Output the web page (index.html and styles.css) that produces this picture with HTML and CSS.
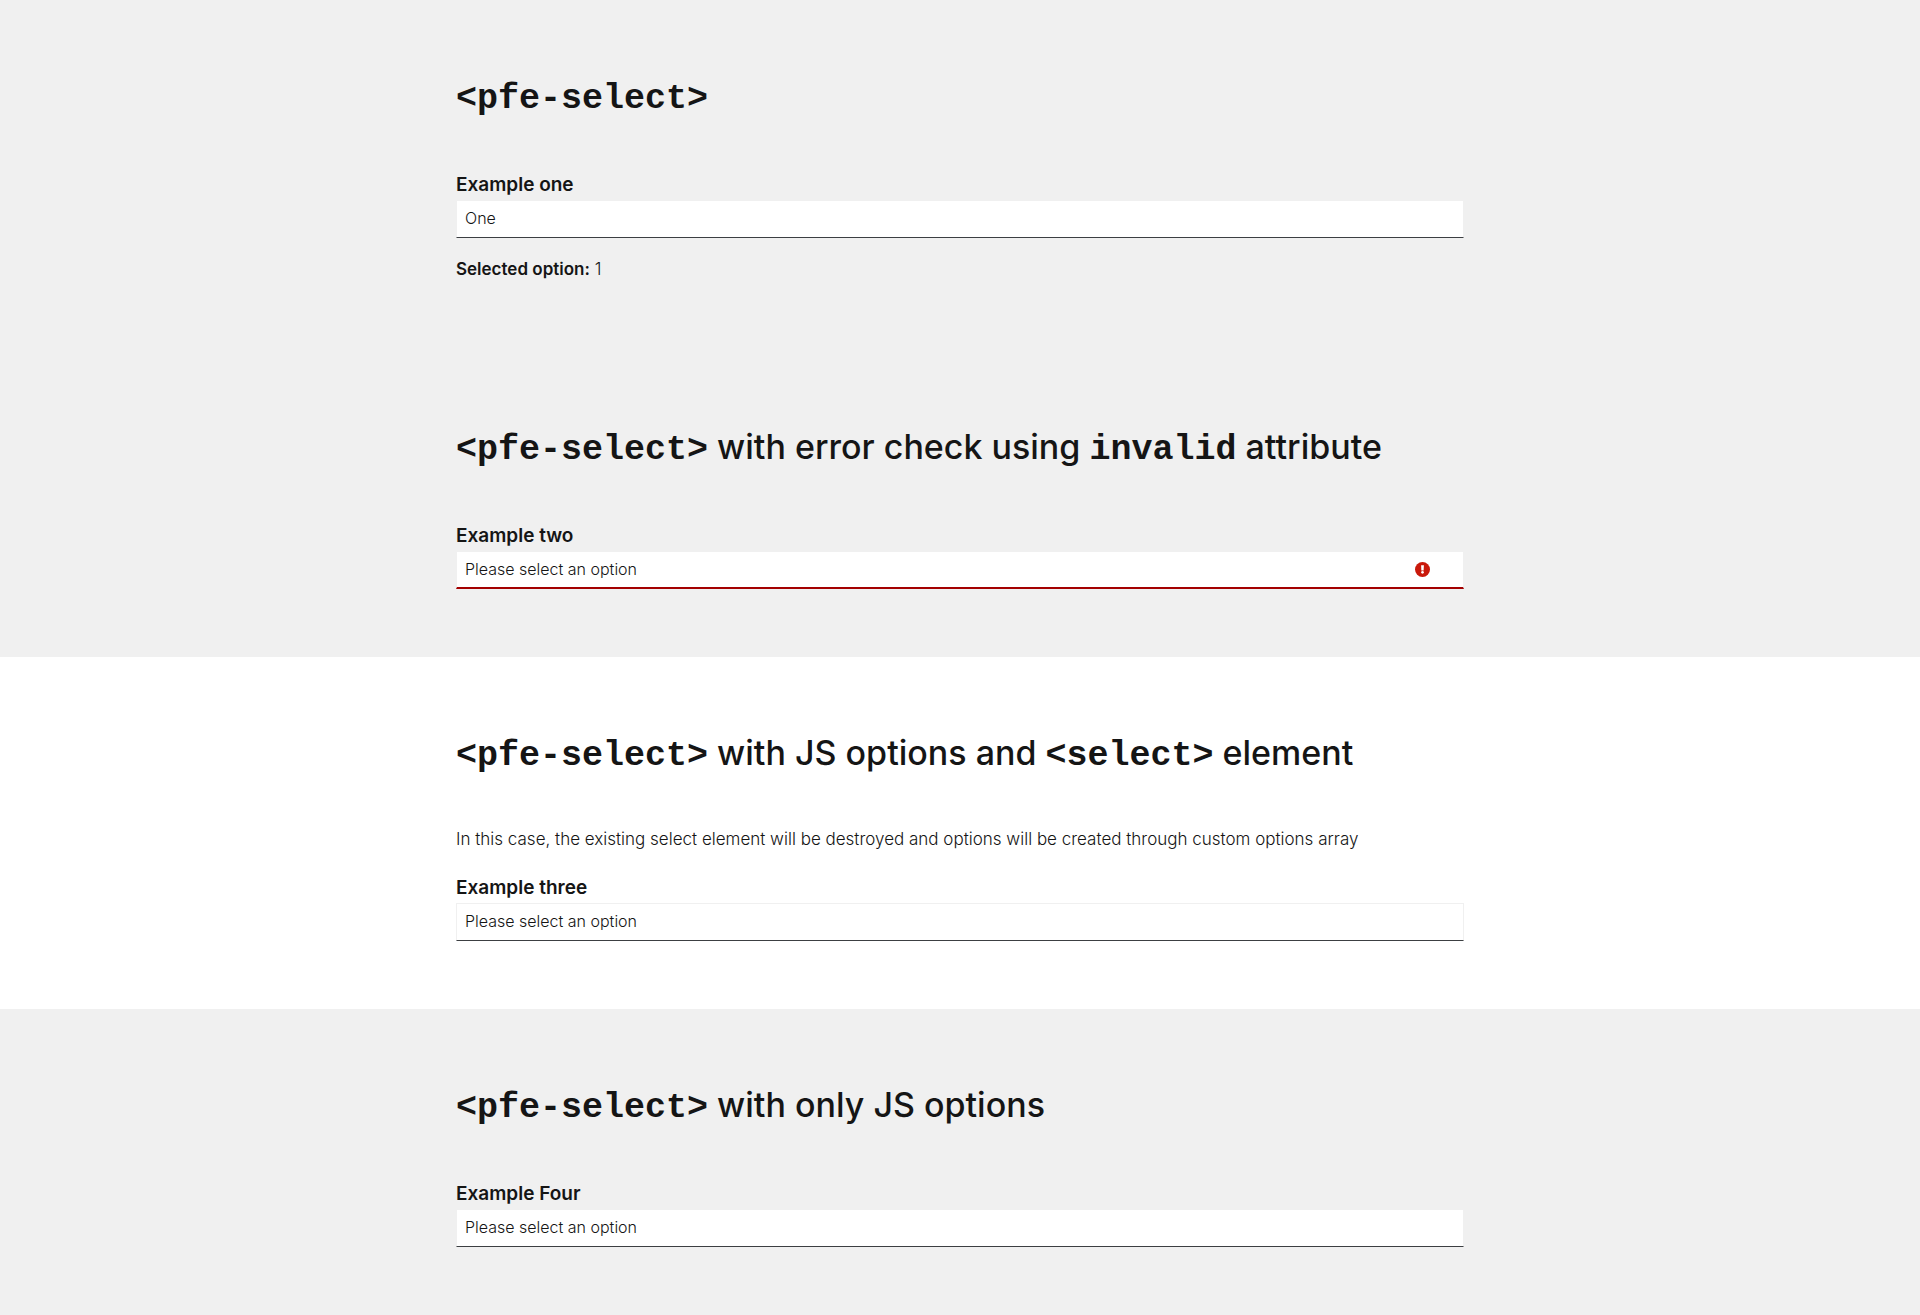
FILE: index.html
```html
<!DOCTYPE html>
<html lang="en">
<head>
  <meta charset="utf-8">
  <meta name="viewport" content="width=device-width, initial-scale=1">
  <title>pfe-select</title>
  <link rel="stylesheet" href="styles.css">
</head>
<body>
  <main>
    <section class="band band--muted">
      <div class="container">
        <h2 class="heading"><code>&lt;pfe-select&gt;</code></h2>
        <div class="field">
          <label class="field__label" for="example-one">Example one</label>
          <div class="field__control">
            <select class="select" id="example-one">
              <option value="1" selected>One</option>
            </select>
          </div>
        </div>
        <p class="result"><strong>Selected option:</strong> 1</p>
      </div>
    </section>

    <section class="band band--muted">
      <div class="container">
        <h2 class="heading"><code>&lt;pfe-select&gt;</code> with error check using <code>invalid</code> attribute</h2>
        <div class="field">
          <label class="field__label" for="example-two">Example two</label>
          <div class="field__control">
            <select class="select select--invalid" id="example-two" aria-invalid="true">
              <option selected>Please select an option</option>
            </select>
            <svg class="field__icon" viewBox="0 0 512 512" aria-hidden="true">
              <circle cx="256" cy="256" r="256" fill="#c9190b"/>
              <path d="M208 112h96l-9 176h-78z" fill="#fff"/>
              <circle cx="256" cy="352" r="46" fill="#fff"/>
            </svg>
          </div>
        </div>
      </div>
    </section>

    <section class="band">
      <div class="container">
        <h2 class="heading"><code>&lt;pfe-select&gt;</code> with JS options and <code>&lt;select&gt;</code> element</h2>
        <p class="intro">In this case, the existing select element will be destroyed and options will be created through custom options array</p>
        <div class="field">
          <label class="field__label" for="example-three">Example three</label>
          <div class="field__control">
            <select class="select" id="example-three">
              <option selected>Please select an option</option>
            </select>
          </div>
        </div>
      </div>
    </section>

    <section class="band band--muted">
      <div class="container">
        <h2 class="heading"><code>&lt;pfe-select&gt;</code> with only JS options</h2>
        <div class="field">
          <label class="field__label" for="example-four">Example Four</label>
          <div class="field__control">
            <select class="select" id="example-four">
              <option selected>Please select an option</option>
            </select>
          </div>
        </div>
      </div>
    </section>
  </main>
</body>
</html>
```
FILE: styles.css
```css
* {
  box-sizing: border-box;
}

body {
  margin: 0;
  background: #fff;
  color: #151515;
  font: 300 17px/27px Inter, "Noto Sans", sans-serif;
}

.band {
  padding: 72px 16px 68px;
  background: #fff;
}

.band--muted {
  background: #f0f0f0;
}

.container {
  max-width: 1008px;
  margin: 0 auto;
}

.heading {
  margin: 0 0 48px;
  font-size: 34px;
  font-weight: 500;
  line-height: 48px;
}

.heading code {
  font: 700 35px/1 "Liberation Mono", monospace;
}

.intro {
  margin: 0 0 17px;
  line-height: 29px;
}

.result {
  margin: 18px 0 0;
}

.result strong {
  font-weight: 600;
}

.field__label {
  display: block;
  padding-top: 2px;
  font-size: 19px;
  font-weight: 600;
  line-height: 30px;
}

.field__control {
  position: relative;
}

.select {
  display: block;
  width: 100%;
  height: 38px;
  padding: 0 8px 2px;
  border: 1px solid #f0f0f0;
  border-bottom-color: #3c3f42;
  border-radius: 0;
  background: #fff;
  color: #151515;
  font: 300 16px/24px Inter, "Noto Sans", sans-serif;
  appearance: none;
}

.select--invalid {
  padding-right: 56px;
  padding-bottom: 1px;
  border-bottom: 2px solid #a30000;
}

.field__icon {
  position: absolute;
  top: 11px;
  right: 34px;
  width: 15px;
  height: 15px;
  pointer-events: none;
}
```
